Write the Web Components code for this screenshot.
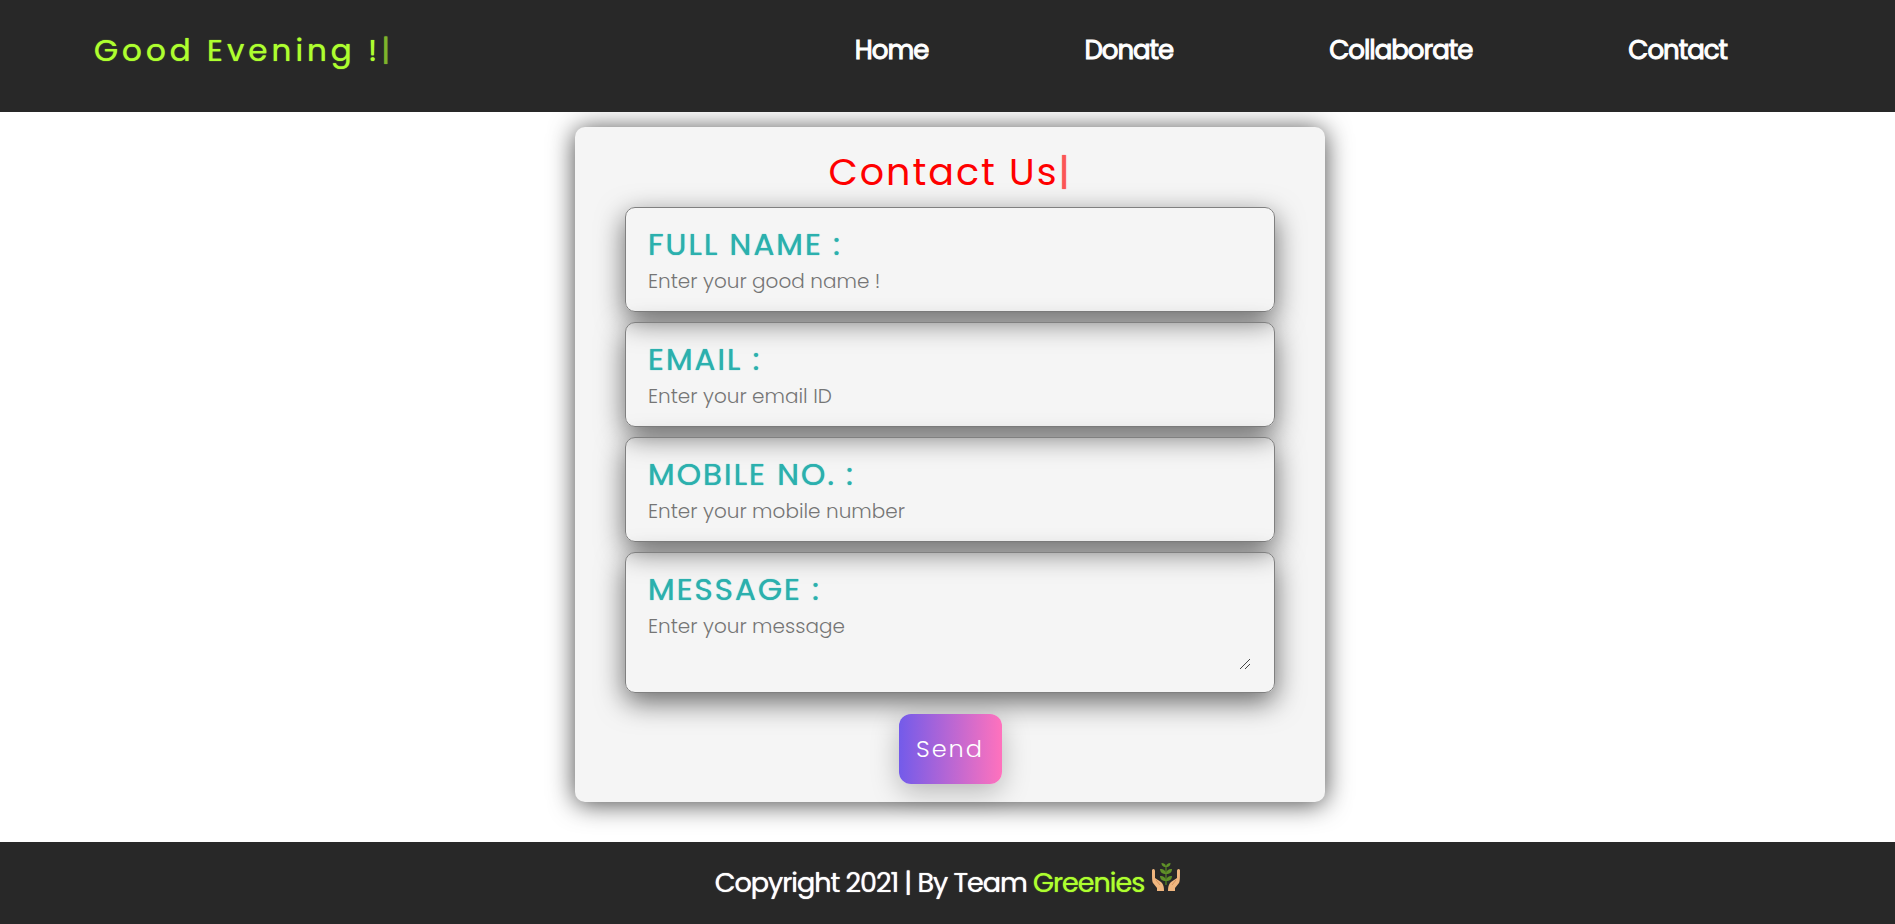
<!DOCTYPE html>
<html lang="en">
<head>
<meta charset="utf-8">
<meta name="viewport" content="width=device-width, initial-scale=1">
<title>Contact Us | Greenies</title>
<style>
  html, body { margin: 0; }
  body {
    min-height: 100vh;
    background: #fff;
    font-family: Poppins, Inter, sans-serif;
  }
</style>
</head>
<body>
<contact-page></contact-page>

<script>
const define = (name, html, setup) => {
  const template = document.createElement('template');
  template.innerHTML = html;
  customElements.define(name, class extends HTMLElement {
    constructor() {
      super();
      this.attachShadow({ mode: 'open' }).append(template.content.cloneNode(true));
    }
    connectedCallback() {
      if (setup) setup(this, this.shadowRoot);
    }
  });
};

define('typed-text', `
  <style>
    :host { display: inline-block; white-space: nowrap; }
    .caret { opacity: .65; text-shadow: 0 0 1px currentColor; }
  </style>
  <slot></slot><span class="caret">|</span>`);

define('nav-link', `
  <style>
    :host { display: block; }
    a {
      color: #fff; text-decoration: none; font-size: 26px; line-height: 40px;
      letter-spacing: -1px; -webkit-text-stroke: 1px;
    }
  </style>
  <a href="#"><slot></slot></a>`,
  (host, root) => { root.querySelector('a').href = host.getAttribute('to'); });

define('site-header', `
  <style>
    :host { display: block; background: #282828; }
    header {
      display: flex; align-items: center; justify-content: space-between;
      min-height: 100px; padding: 0 168px 12px 94px;
    }
    .brand {
      color: greenyellow; font-size: 31px; line-height: 48px; letter-spacing: 4px;
      text-shadow: 0 0 1px currentColor;
    }
    nav { display: flex; gap: 156px; }
  </style>
  <header>
    <typed-text class="brand">Good Evening !</typed-text>
    <nav aria-label="Main"><slot></slot></nav>
  </header>`);

define('form-field', `
  <style>
    :host {
      display: block; box-sizing: border-box; padding: 16px 22px 15px;
      border: 1px solid #808080; border-radius: 10px;
      box-shadow: 0 9px 28px rgba(0,0,0,.58);
    }
    label {
      display: block; margin-bottom: 2px; color: #2bb0ae; font-size: 31px; line-height: 40px;
      letter-spacing: 2px; text-transform: uppercase; text-shadow: 0 0 1px currentColor;
    }
    input, textarea {
      display: block; box-sizing: border-box; width: 100%; height: 30px;
      margin: 0; padding: 0; border: 0; outline: 0; background: transparent;
      font: 300 20px/30px Poppins, Inter, sans-serif; color: #333;
    }
    textarea { height: 61px; margin-bottom: 5px; resize: both; }
    textarea::-webkit-resizer {
      background: url("data:image/svg+xml,%3Csvg xmlns='http://www.w3.org/2000/svg' width='15' height='15'%3E%3Cpath d='M3 12L13 2M8 12L13 7' stroke='%23444' fill='none'/%3E%3C/svg%3E") no-repeat;
    }
    ::placeholder { color: #757575; opacity: 1; }
  </style>
  <label for="control"><slot></slot></label>`,
  (host, root) => {
    if (root.getElementById('control')) return;
    const multiline = host.hasAttribute('multiline');
    const control = document.createElement(multiline ? 'textarea' : 'input');
    control.id = 'control';
    if (!multiline) control.type = host.getAttribute('type') || 'text';
    control.placeholder = host.getAttribute('hint');
    root.append(control);
  });

define('send-button', `
  <style>
    :host { display: block; }
    button {
      display: block; min-width: 103px; height: 70px; padding: 0 17px; border: 0; border-radius: 12px;
      background: linear-gradient(90deg, #735bea, #ff72bd);
      box-shadow: 0 8px 28px rgba(0,0,0,.25);
      color: #fff; font: 300 24px/34px Poppins, Inter, sans-serif; letter-spacing: 2px;
      cursor: pointer;
    }
  </style>
  <button type="submit"><slot></slot></button>`);

define('contact-card', `
  <style>
    :host {
      display: block; box-sizing: border-box; width: 100%; max-width: 750px;
      padding: 15px 50px 18px; border-radius: 10px; background: whitesmoke;
      box-shadow: 0 2px 26px rgba(0,0,0,.72);
    }
    h1 {
      margin: 0 0 5px; text-align: center; color: red;
      font-size: 38px; line-height: 60px; font-weight: 400; letter-spacing: 2px;
    }
    form { display: flex; flex-direction: column; gap: 10px; }
    send-button { align-self: center; margin-top: 11px; }
  </style>
  <h1><typed-text>Contact Us</typed-text></h1>
  <form>
    <form-field hint="Enter your good name !">Full Name :</form-field>
    <form-field type="email" hint="Enter your email ID">Email :</form-field>
    <form-field type="tel" hint="Enter your mobile number">Mobile No. :</form-field>
    <form-field multiline hint="Enter your message">Message :</form-field>
    <send-button>Send</send-button>
  </form>`);

define('plant-icon', `
  <style>
    :host { display: block; width: 28px; height: 28px; }
    svg { display: block; width: 100%; height: 100%; }
  </style>
  <svg viewBox="0 0 28 28" aria-hidden="true">
    <path d="M14 3V22" stroke="#4f7f22" stroke-width="1.4"/>
    <g fill="#5f9128">
      <path d="M14 4C10.500 4 9.500 2 9.500 0C12 0 14 1 14 4Z"/><path d="M14 4C17.500 4 18.500 2 18.500 0C16 0 14 1 14 4Z"/>
      <path d="M14 11C10 11 8 9 8 6C12 6 14 8 14 11Z"/><path d="M14 11C18 11 20 9 20 6C16 6 14 8 14 11Z"/>
      <path d="M14 18C10 18 8 16 8 13C12 13 14 15 14 18Z"/><path d="M14 18C18 18 20 16 20 13C16 13 14 15 14 18Z"/>
    </g>
    <g fill="#f0b67f">
      <path d="M0 7C1 5 3 6 3 8V15L9 19C11 21 12 23 12 28H5V25L1 20C0 18 0 15 0 7Z"/>
      <path d="M28 7C27 5 25 6 25 8V15L19 19C17 21 16 23 16 28H23V25L27 20C28 18 28 15 28 7Z"/>
    </g>
    <path d="M4 17L8 22M24 17L20 22" stroke="#d3935f" fill="none"/>
  </svg>`);

define('site-footer', `
  <style>
    :host { display: block; background: #282828; color: #fff; }
    footer {
      display: flex; align-items: center; justify-content: center; gap: 8px;
      min-height: 82px; font-size: 27px; line-height: 40px;
      letter-spacing: -1px; text-shadow: 0 0 1px currentColor;
    }
    p { margin: 0; }
    plant-icon { margin-bottom: 12px; }
    .team { color: greenyellow; text-shadow: 0 0 1px currentColor; }
  </style>
  <footer>
    <p>Copyright 2021 | By Team <span class="team">Greenies</span></p>
    <plant-icon></plant-icon>
  </footer>`);

define('contact-page', `
  <style>
    :host { display: flex; flex-direction: column; min-height: 100vh; }
    site-header, site-footer { position: relative; }
    main { flex: 1; display: flex; justify-content: center; align-items: flex-start; padding: 15px 0 40px 5px; }
  </style>
  <site-header>
    <nav-link to="#home">Home</nav-link>
    <nav-link to="#donate">Donate</nav-link>
    <nav-link to="#collaborate">Collaborate</nav-link>
    <nav-link to="#contact">Contact</nav-link>
  </site-header>
  <main><contact-card></contact-card></main>
  <site-footer></site-footer>`);
</script>
</body>
</html>
